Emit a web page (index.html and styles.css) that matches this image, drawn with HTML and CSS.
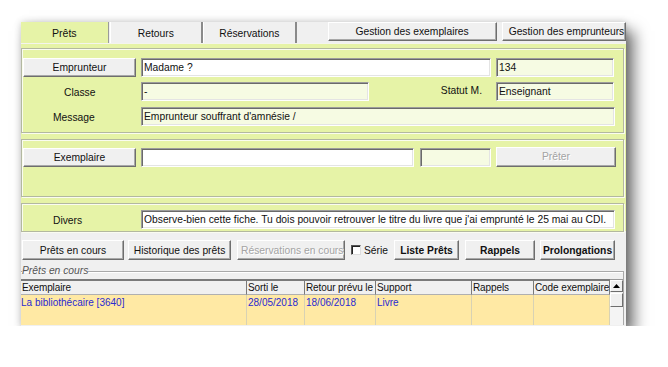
FILE: index.html
```html
<!DOCTYPE html>
<html lang="fr">
<head>
<meta charset="utf-8">
<title>Prêts</title>
<link rel="stylesheet" href="styles.css">
</head>
<body>
<div class="window">
  <div class="tabs">
    <div class="tab active">Prêts</div>
    <div class="tab t-ret">Retours</div>
    <div class="tab t-res">Réservations</div>
    <div class="tabbtn t-gex">Gestion des exemplaires</div>
    <div class="tabbtn t-gem">Gestion des emprunteurs</div>
  </div>
  <div class="green">
    <div class="frame f1">
      <div class="row">
        <div class="btn col">Emprunteur</div>
        <div class="field white w-name">Madame ?</div>
        <div class="field cream w-side">134</div>
      </div>
      <div class="row r2">
        <div class="label col l-classe">Classe</div>
        <div class="field cream w-classe">-</div>
        <div class="label l-statut">Statut M.</div>
        <div class="field cream w-side2">Enseignant</div>
      </div>
      <div class="row r3">
        <div class="label col l-msg">Message</div>
        <div class="field cream w-full">Emprunteur souffrant d'amnésie /</div>
      </div>
    </div>
    <div class="frame f2">
      <div class="row">
        <div class="btn col">Exemplaire</div>
        <div class="field white w-ex">&nbsp;</div>
        <div class="field cream w-code">&nbsp;</div>
        <div class="btn disabled w-preter">Prêter</div>
      </div>
    </div>
    <div class="frame f3">
      <div class="row">
        <div class="label col l-msg">Divers</div>
        <div class="field white w-full">Observe-bien cette fiche. Tu dois pouvoir retrouver le titre du livre que j'ai emprunté le 25 mai au CDI.</div>
      </div>
    </div>
  </div>
  <div class="actions">
    <div class="btn b-cours">Prêts en cours</div>
    <div class="btn b-hist">Historique des prêts</div>
    <div class="btn disabled b-res">Réservations en cours</div>
    <div class="check"></div>
    <div class="serie">Série</div>
    <div class="btn bold b-liste">Liste Prêts</div>
    <div class="btn bold b-rap">Rappels</div>
    <div class="btn bold b-prol">Prolongations</div>
  </div>
  <fieldset class="group">
    <legend>Prêts en cours</legend>
    <div class="table">
      <div class="grid">
        <div class="th">Exemplaire</div>
        <div class="th">Sorti le</div>
        <div class="th">Retour prévu le</div>
        <div class="th">Support</div>
        <div class="th">Rappels</div>
        <div class="th">Code exemplaire</div>
        <div class="td first">La bibliothécaire [3640]</div>
        <div class="td">28/05/2018</div>
        <div class="td">18/06/2018</div>
        <div class="td">Livre</div>
        <div class="td"></div>
        <div class="td"></div>
      </div>
      <div class="scrollbar">
        <div class="sb-btn"><svg width="7" height="4" viewBox="0 0 7 4"><path d="M0 4 L3.5 0 L7 4 Z" fill="#000"/></svg></div>
        <div class="sb-thumb"></div>
      </div>
    </div>
  </fieldset>
</div>
</body>
</html>
```

FILE: styles.css
```css
* { box-sizing: border-box; }
html, body { margin: 0; padding: 0; background: #fff; }
body {
  font-family: "Liberation Sans", Arial, sans-serif;
  font-size: 10.3px;
  color: #111;
}
.window {
  margin: 22px 0 0 21px;
  width: 605px;
  height: 304px;
  background: #f0f0f0;
  overflow: hidden;
  box-shadow: 0 0 7px rgba(0,0,0,0.18), 8px 9px 14px rgba(0,0,0,0.55);
}

/* tabs */
.tabs { display: flex; height: 21px; align-items: flex-start; }
.tab {
  height: 21px;
  display: flex; align-items: center; justify-content: center;
  border-left: 1px solid #fff;
  border-right: 2px solid #8a8a8a;
  background: #f0f0f0;
  padding-top: 1px;
}
.tab.active { width: 88px; background: #e6f3a7; border-left: none; border-right: 1px solid #9a9a9a; font-size: 10.6px; }
.t-ret { width: 94px; margin-left: 1px; }
.t-res { width: 94px; }
.tabbtn {
  height: 19px;
  display: flex; align-items: center; justify-content: center;
  background: #f0f0f0;
  border: 1px solid; border-color: #fff #6e6e6e #6e6e6e #fff;
  box-shadow: inset -1px -1px 0 #a8a8a8;
  white-space: nowrap;
}
.t-gex { width: 170px; margin-left: 31px; }
.t-gem { width: 125px; margin-left: 5px; justify-content: flex-start; padding-left: 6px; overflow: hidden; }

/* green area */
.green {
  background: #e6f3a7;
  border-top: 1px solid #f4f4ee;
  padding-top: 4px;
  height: 188px;
}
.frame {
  width: 603px;
  border: 1px solid #b3b8a0;
  box-shadow: inset 1px 1px 0 #fafcf0, 1px 1px 0 #fafcf0;
}
.f1 { height: 85px; padding-top: 9px; }
.f2 { height: 58px; margin-top: 6px; padding-top: 8px; }
.f3 { height: 29px; margin-top: 6px; padding-top: 6px; }
.row { display: flex; align-items: center; height: 19px; padding-left: 1px; }
.r2 { margin-top: 5px; }
.r3 { margin-top: 6px; }
.col { width: 113px; flex: none; }
.label { height: 19px; display: flex; align-items: center; }
.l-classe { padding-left: 41px; padding-top: 2px; }
.l-msg { padding-left: 30px; padding-top: 1px; }
.l-statut { width: 127px; justify-content: flex-end; padding-right: 14px; padding-bottom: 2px; }

.btn {
  height: 19px;
  display: flex; align-items: center; justify-content: center;
  background: #f0f0f0;
  border: 1px solid; border-color: #fff #6e6e6e #6e6e6e #fff;
  box-shadow: inset -1px -1px 0 #a8a8a8;
  white-space: nowrap;
  overflow: hidden;
}
.btn.disabled { color: #a3a3a3; text-shadow: 1px 1px 0 #fff; }
.btn.bold { font-weight: bold; }

.field {
  height: 19px;
  display: flex; align-items: center;
  padding-left: 2px;
  border: 1px solid; border-color: #9c9c9c #fff #fff #9c9c9c;
  box-shadow: inset 1px 1px 0 #6a6a6a, inset -1px -1px 0 #e4e4e4;
  white-space: nowrap; overflow: hidden;
}
.white { background: #fff; }
.cream { background: #f6fbe3; }
.w-name { width: 350px; margin-left: 5px; }
.w-side { width: 118px; margin-left: 5px; }
.w-side2 { width: 118px; }
.w-classe { width: 228px; margin-left: 5px; }
.w-full { width: 474px; margin-left: 5px; }
.w-ex { width: 273px; margin-left: 5px; }
.w-code { width: 71px; margin-left: 6px; }
.w-preter { width: 120px; height: 20px; margin-left: 5px; margin-top: -2px; }

/* bottom actions */
.actions { display: flex; align-items: center; height: 20px; margin-top: 9px; padding-left: 1px; }
.actions .btn { height: 20px; flex: none; }
.b-cours { width: 102px; }
.b-hist { width: 103px; margin-left: 4px; }
.b-res { width: 108px; margin-left: 6px; justify-content: flex-start; padding-left: 3px; }
.check {
  flex: none;
  width: 10px; height: 10px; margin-left: 6px;
  background: #fff;
  border: 1px solid; border-color: #555 #ddd #ddd #555;
  box-shadow: inset 1px 1px 0 #222;
}
.serie { width: 25px; margin-left: 3px; flex: none; white-space: nowrap; }
.b-liste { width: 65px; margin-left: 5px; }
.b-rap { width: 70px; margin-left: 6px; }
.b-prol { width: 75px; margin-left: 5px; }

/* group */
.group {
  margin: 5px 2px 0 0;
  padding: 2px 0 0 0;
  border: 1px solid #a9a9a9;
  border-left: none; border-bottom: none;
  box-shadow: inset 0 1px 0 #fff;
  min-width: 0;
  width: 603px;
}
.group legend {
  padding: 0;
  margin-left: 1px;
  font-style: italic;
  color: #555;
  line-height: 12px;
}
.table { display: flex; font-size: 10px; }
.grid {
  display: grid;
  grid-template-columns: 226px 58px 71px 96px 62px 76px;
  grid-template-rows: 16px 30px;
}
.th {
  background: #f0f0f0;
  border-top: 2px solid #7a7a7a;
  border-right: 1px solid #7a7a7a;
  border-bottom: 1px solid #b0b0b0;
  padding-left: 1px;
  display: flex; align-items: center;
  white-space: nowrap; overflow: hidden;
  letter-spacing: -0.1px;
}
.td {
  background: #ffe9a4;
  border-right: 1px solid #d8d2b4;
  color: #2a2ad2;
  padding: 2px 0 0 1px;
  white-space: nowrap; overflow: hidden;
}
.td.first { padding-left: 0; }
.scrollbar {
  width: 13px;
  height: 46px;
  background: #f4f4f4;
  border-top: 1px solid #9a9a9a;
  display: flex; flex-direction: column;
}
.sb-btn {
  height: 12px;
  display: flex; align-items: center; justify-content: center;
  background: #f0f0f0;
  border: 1px solid; border-color: #fff #6e6e6e #6e6e6e #fff;
}
.sb-thumb {
  height: 14px;
  margin-top: 1px;
  background: #f0f0f0;
  border: 1px solid; border-color: #fff #6e6e6e #6e6e6e #fff;
}
```
